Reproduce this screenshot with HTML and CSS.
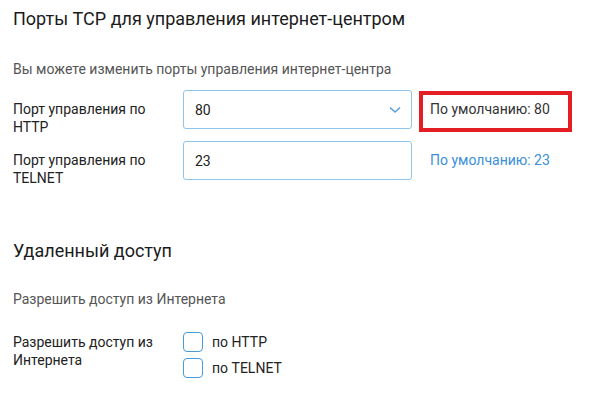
FILE: index.html
```html
<!DOCTYPE html>
<html lang="ru">
<head>
    <meta charset="UTF-8">
    <meta name="viewport" content="width=device-width, initial-scale=1.0">
    <title>Управление</title>
    <link rel="stylesheet" href="styles.css">
</head>
<body>
    <div class="page">
        <section class="section">
            <h2 class="section-title">Порты TCP для управления интернет-центром</h2>
            <p class="section-hint">Вы можете изменить порты управления интернет-центра</p>

            <div class="form-row">
                <div class="form-label">Порт управления по HTTP</div>
                <div class="field">
                    <input class="field-input" type="text" value="80">
                    <svg class="field-chevron" width="12" height="8" viewBox="0 0 12 8">
                        <path d="M1 1.5 L6 6 L11 1.5" fill="none" stroke="#5b9fd9" stroke-width="1.6"/>
                    </svg>
                </div>
                <div class="form-default marked">По умолчанию: 80</div>
            </div>

            <div class="form-row">
                <div class="form-label">Порт управления по TELNET</div>
                <div class="field">
                    <input class="field-input" type="text" value="23">
                </div>
                <div class="form-default link">По умолчанию: 23</div>
            </div>
        </section>

        <section class="section remote">
            <h2 class="section-title">Удаленный доступ</h2>
            <p class="section-hint">Разрешить доступ из Интернета</p>

            <div class="form-row checks-row">
                <div class="form-label">Разрешить доступ из Интернета</div>
                <div class="checks">
                    <label class="check"><span class="check-box"></span>по HTTP</label>
                    <label class="check"><span class="check-box"></span>по TELNET</label>
                </div>
            </div>
        </section>
    </div>
</body>
</html>
```

FILE: styles.css
```css
body {
    margin: 0;
    font-family: Roboto, "Liberation Sans", Arial, sans-serif;
    color: #222;
    background: #fff;
}
.page {
    padding: 7px 13px 0;
}
.section-title {
    margin: 0;
    font-size: 18px;
    font-weight: 400;
    line-height: 24px;
    color: #1b1b1b;
}
.section-hint {
    margin: 29px 0 0;
    font-size: 14px;
    line-height: 18px;
    color: #555;
}
.form-row {
    display: grid;
    grid-template-columns: 170px 229px auto;
    align-items: start;
    margin-top: 12px;
}
.form-row + .form-row {
    margin-top: 5px;
}
.form-label {
    padding-top: 10px;
    padding-right: 24px;
    font-size: 14px;
    line-height: 18px;
    color: #222;
}
.field {
    position: relative;
}
.field-input {
    display: block;
    box-sizing: border-box;
    width: 229px;
    height: 39px;
    padding: 0 11px;
    border: 1px solid #8ec5ee;
    border-radius: 3px;
    font-family: inherit;
    font-size: 14px;
    color: #222;
    outline: none;
}
.field-chevron {
    position: absolute;
    right: 11px;
    top: 16px;
}
.form-default {
    position: relative;
    margin-left: 18px;
    padding-top: 10px;
    font-size: 14px;
    line-height: 18px;
    white-space: nowrap;
}
.form-default.link {
    color: #3b8fd8;
}
.form-default.marked {
    color: #333;
}
.form-default.marked::after {
    content: "";
    position: absolute;
    left: -11px;
    top: 1px;
    width: 153px;
    height: 41px;
    box-sizing: border-box;
    border: 4px solid #e31e24;
}
.remote {
    margin-top: 52px;
}
.remote .section-hint {
    margin-top: 27px;
}
.checks-row {
    margin-top: 25px;
}
.checks-row .form-label {
    padding-top: 0;
}
.checks {
    display: flex;
    flex-direction: column;
    gap: 6px;
    margin-top: -1px;
}
.check {
    display: flex;
    align-items: center;
    gap: 9px;
    font-size: 14px;
    line-height: 18px;
    color: #222;
}
.check-box {
    width: 20px;
    height: 20px;
    box-sizing: border-box;
    border: 1.5px solid #4a9ad8;
    border-radius: 4px;
}
```
